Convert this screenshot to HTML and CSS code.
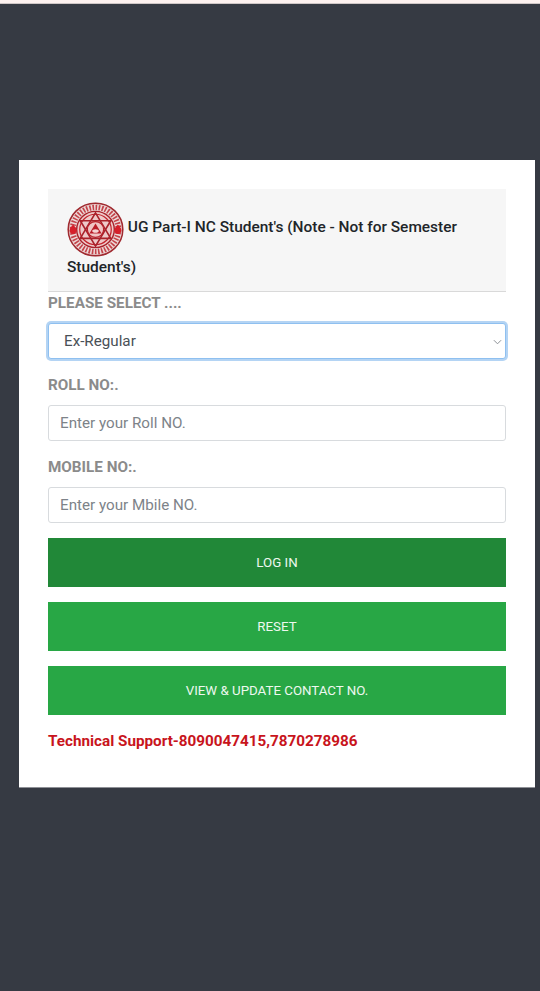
FILE: index.html
```html
<!DOCTYPE html>
<html lang="en">
<head>
<meta charset="utf-8">
<title>UG Part-I NC Student Login</title>
<link rel="stylesheet" href="styles.css">
</head>
<body>
<div class="top-strip"></div>
<main class="page">
  <section class="card">
    <header class="card-header">
      <h1 class="title">
        <svg class="logo" viewBox="0 0 56 56" preserveAspectRatio="none" aria-hidden="true">
          <circle cx="28" cy="28" r="27.5" fill="#ecd9d8"/>
          <circle cx="28" cy="28" r="26.8" fill="none" stroke="#a02a30" stroke-width="1.5"/>
          <circle cx="28" cy="28" r="22.5" fill="none" stroke="#c4434a" stroke-width="5.5" stroke-dasharray="1.6 1.5"/>
          <circle cx="28" cy="28" r="18.5" fill="#eec9c9" stroke="#a9222b" stroke-width="1.4"/>
          <circle cx="28" cy="28" r="15.5" fill="none" stroke="#c3242d" stroke-width="1.2"/>
          <path d="M28 11 43 37H13Z" fill="none" stroke="#a9222b" stroke-width="1.6"/>
          <path d="M28 45 13 19H43Z" fill="none" stroke="#a9222b" stroke-width="1.6"/>
          <circle cx="28" cy="28" r="8" fill="#f0c4c4" stroke="#b51f29" stroke-width="1.2"/>
          <path d="M28 22 34 32H22Z" fill="#b81c27"/>
          <ellipse cx="28" cy="29.500" rx="3.200" ry="1.800" fill="#f5d3d3"/>
          <path d="M6 23c-1.500 2-3.500 3.500-3.500 6s2 3.500 3.500 3.500 3.500-1 3.500-3.500S7.500 25 6 23Z" fill="#d5202b"/>
          <path d="M50 23c-1.500 2-3.500 3.500-3.500 6s2 3.500 3.500 3.500 3.500-1 3.500-3.500S51.500 25 50 23Z" fill="#d5202b"/>
        </svg>
        UG Part-I NC Student's (Note - Not for Semester Student's)
      </h1>
    </header>
    <form class="form">
      <label class="label label-first" for="type">PLEASE SELECT ....</label>
      <div class="select-wrap">
        <select class="control select" id="type">
          <option>Ex-Regular</option>
          <option>Regular</option>
        </select>
        <svg class="chevron" viewBox="0 0 10 6" aria-hidden="true"><path d="M1 1l4 4 4-4" fill="none" stroke="#8b8f94" stroke-width="1.1"/></svg>
      </div>
      <label class="label" for="roll">ROLL NO:.</label>
      <input class="control" id="roll" type="text" placeholder="Enter your Roll NO.">
      <label class="label" for="mobile">MOBILE NO:.</label>
      <input class="control" id="mobile" type="text" placeholder="Enter your Mbile NO.">
      <div class="actions">
        <button class="btn btn-active" type="button">LOG IN</button>
        <button class="btn" type="reset">RESET</button>
        <button class="btn" type="button">VIEW &amp; UPDATE CONTACT NO.</button>
      </div>
      <p class="support">Technical Support-8090047415,7870278986</p>
    </form>
  </section>
</main>
</body>
</html>
```
FILE: styles.css
```css
* { box-sizing: border-box; }
html, body { margin: 0; height: 100%; }
body {
  background: #363a43;
  font-family: Roboto, "Liberation Sans", sans-serif;
  color: #212529;
}
.top-strip {
  height: 4px;
  background: #fdf1ef;
  border-bottom: 1px solid #cfc6c6;
}
.page { padding: 156px 5px 0 19px; }
.card {
  height: 628px;
  background: #fff;
  padding: 29px 29px 0;
  border-bottom: 1px solid #8e9096;
}
.card-header {
  height: 103px;
  padding: 13px 19px 0;
  background: #f6f6f6;
  border-bottom: 1px solid #d9d9d9;
}
.logo {
  width: 57px;
  height: 55px;
  vertical-align: -25px;
  filter: blur(0.5px);
}
.title {
  margin: 0;
  font-size: 15.45px;
  line-height: 20px;
  font-weight: 500;
  color: #212529;
}
.form { display: flex; flex-direction: column; }
.label {
  height: 20px;
  line-height: 20px;
  margin-top: 16px;
  margin-bottom: 10px;
  font-size: 15.25px;
  font-weight: 700;
  color: #8b8b8b;
}
.label-first { margin-top: 1px; margin-bottom: 10px; height: 20px; }
.control {
  display: block;
  width: 100%;
  height: 36px;
  padding: 0 11px;
  background: #fff;
  border: 1px solid #d8dbde;
  border-radius: 3px;
  font-family: inherit;
  font-size: 15.2px;
  color: #495057;
  outline: none;
}
.control::placeholder { color: #7d8389; opacity: 1; }
.select-wrap { position: relative; }
.select {
  appearance: none;
  padding-left: 15px;
  border-color: #8fc0f0;
  box-shadow: 0 0 0 2px #b4d4f4;
}
.chevron {
  position: absolute;
  right: 4px;
  top: 16px;
  width: 9px;
  height: 6px;
  pointer-events: none;
}
.actions {
  display: flex;
  flex-direction: column;
  gap: 15px;
  margin-top: 15px;
}
.btn {
  height: 49px;
  border: 0;
  background: #28a745;
  color: #eef8f0;
  font-family: inherit;
  font-size: 13.3px;
}
.btn-active { background: #218838; }
.support {
  margin: 16px 0 0;
  font-size: 15.25px;
  line-height: 20px;
  font-weight: 700;
  color: #c8141c;
}
```
